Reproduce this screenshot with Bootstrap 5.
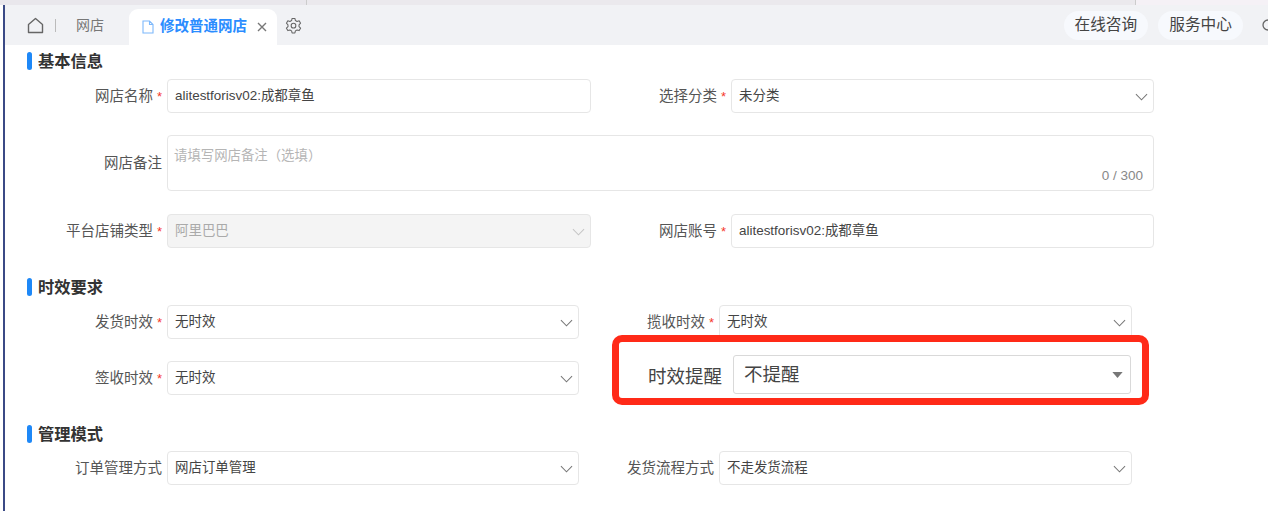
<!DOCTYPE html>
<html lang="zh-CN">
<head>
<meta charset="utf-8">
<title>修改普通网店</title>
<link href="https://cdn.jsdelivr.net/npm/bootstrap@5.3.0/dist/css/bootstrap.min.css" rel="stylesheet">
<style>
html,body{height:528px;overflow:hidden;background:#fff}
body{font-family:"Liberation Sans","Noto Sans CJK SC",sans-serif;color:#555;font-size:14.5px}
.topstrip{height:5px;background:#e9e7ec;display:flex}
.topstrip i{display:block;height:100%}
.seg1{width:306px}
.seg2{width:829px;border-left:1px solid #ccc;background:#ebe9ed}
.seg3{flex:1;border-left:1px solid #ccc;background:#f5f1f6}
.frame{height:506px;border-left:2px solid #3b4a86;margin-left:3px}
.tabbar{height:40px;background:#f1f2f5;overflow:hidden;padding-left:22px}
.tabhome{flex:none}
.tabsep{width:1px;height:13px;background:#bbb;margin:0 20px 0 11px}
.tabplain{font-size:14px;color:#777;margin-right:25px}
.tabcur{height:36px;margin-top:4px;width:148px;flex:none;background:#fff;border-radius:9px 9px 0 0;color:#2a8cff;padding-left:13px}
.tabcur b{font-weight:600;font-size:14.5px;margin:0 10px 0 6px;white-space:nowrap}
.tabgear{margin-left:8px}
.pillb{height:29px;border-radius:15px;background:#f7f9fd;color:#444;font-size:15.7px;padding:0 11px;margin-right:10px;white-space:nowrap}
.pillb.lastp{margin-right:12px}
.pilltail{width:13px;flex:none;overflow:hidden;padding-left:5px;display:flex}
.pilltail svg{flex:none}
.formarea{padding:0 0 0 22px}
.sect{height:18px;display:flex;align-items:center;color:#333;font-weight:600;font-size:16.3px;gap:6px}
.sect::before{content:"";width:5px;height:18px;border-radius:3px;background:#1e88f7}
.s1{margin-top:7px}.s2{margin-top:30px}.s3{margin-top:30px}
.frow{display:flex;height:34px;align-items:stretch}
.lbl{flex:none;display:flex;align-items:center;justify-content:flex-end;white-space:nowrap;color:#555;padding:1px 5px 0 0;width:140px}
.req{color:#f5382a;margin-left:4px;font-size:13px;line-height:1}
.fld{flex:none;display:flex;align-items:center;justify-content:space-between;border:1px solid #e6e6e6;border-radius:4px;background:#fff;padding:1px 5px 0 7px;font-size:13.45px;color:#444}
.w424{width:424px}.w423{width:423px}.w412{width:412px}.w413{width:413px}
.fld svg{color:#777}
.off{background:#f4f4f4;color:#aaa}.off svg{color:#c5c5c5}
.txa{height:56px;margin-top:22px}
.memo{width:987px;flex:none;border:1px solid #e6e6e6;border-radius:4px;padding:10px 7px 0 6px;position:relative;color:#b5b5b5;font-size:13.4px}
.cnt{position:absolute;right:10px;bottom:4px;color:#888;font-size:13.5px}
.redwrap{position:relative;width:413px;flex:none}
.redbox{position:absolute;left:-107px;top:-26px;width:537px;height:70px;border:7px solid #ff2a18;border-radius:10px;background:#fff;display:flex;align-items:flex-end;padding:0 11px 4px 29px;gap:11px}
.redbox span.t{font-size:18.5px;color:#444;white-space:nowrap;line-height:1;padding-bottom:8px}
.bigsel{flex:1;height:39px;border:1px solid #d9d9d9;border-radius:3px;display:flex;align-items:center;justify-content:space-between;font-size:18.5px;color:#444;padding:0 7px 0 10px}
.mt22{margin-top:22px}.mt23{margin-top:23px}.mt13{margin-top:9px}.mt16{margin-top:8px}
</style>
</head>
<body>
<div class="topstrip"><i class="seg1"></i><i class="seg2"></i><i class="seg3"></i></div>
<div class="frame">
  <div class="tabbar d-flex align-items-center">
    <svg class="tabhome" width="17" height="17" viewBox="0 0 17 17" fill="none" stroke="#666" stroke-width="1.4" stroke-linejoin="round"><path d="M1.5 7.5 8.500 1.500l7 6V15.500H1.500Z"/></svg>
    <span class="tabsep"></span>
    <span class="tabplain">网店</span>
    <div class="tabcur d-flex align-items-center">
      <svg width="12" height="14" viewBox="0 0 12 14" fill="none" stroke="#7db8fb" stroke-width="1.1"><path d="M1 1h6.500L11 4.500V13H1Z M7.500 1v3.500H11"/></svg>
      <b>修改普通网店</b>
      <svg width="10" height="10" viewBox="0 0 10 10" stroke="#777" stroke-width="1.4"><path d="M1 1l8 8M9 1 1 9"/></svg>
    </div>
    <svg class="tabgear" width="17" height="17" viewBox="0 0 24 24" fill="none" stroke="#666" stroke-width="1.5" stroke-linejoin="round"><path d="M10 2h4l.7 3 2.300 1.300 3-.9 2 3.400-2.200 2.200v2.600L22 15.800l-2 3.400-3-.9-2.300 1.300L14 22.500h-4l-.7-2.900L7 18.300l-3 .9-2-3.400 2.200-2.200V11L2 8.800l2-3.400 3 .9L9.300 5Z"/><circle cx="12" cy="12.200" r="3.300"/></svg>
    <div class="ms-auto d-flex align-items-center">
      <span class="pillb d-flex align-items-center">在线咨询</span>
      <span class="pillb lastp d-flex align-items-center">服务中心</span>
      <span class="pilltail"><svg width="16" height="16" viewBox="0 0 16 16" fill="none" stroke="#666" stroke-width="1.3"><circle cx="8" cy="8" r="5"/></svg></span>
    </div>
  </div>
  <div class="formarea">
    <div class="sect s1">基本信息</div>
    <div class="frow mt13">
      <div class="lbl">网店名称<span class="req">*</span></div>
      <div class="fld w424">alitestforisv02:成都章鱼</div>
      <div class="lbl">选择分类<span class="req">*</span></div>
      <div class="fld w423">未分类<svg width="13" height="8" viewBox="0 0 14 8" fill="none" stroke="currentColor" stroke-width="1.100"><path d="M1 1l6 6 6-6"/></svg></div>
    </div>
    <div class="frow txa">
      <div class="lbl">网店备注</div>
      <div class="memo">请填写网店备注（选填）<span class="cnt">0 / 300</span></div>
    </div>
    <div class="frow mt23">
      <div class="lbl">平台店铺类型<span class="req">*</span></div>
      <div class="fld w424 off">阿里巴巴<svg width="13" height="8" viewBox="0 0 14 8" fill="none" stroke="currentColor" stroke-width="1.100"><path d="M1 1l6 6 6-6"/></svg></div>
      <div class="lbl">网店账号<span class="req">*</span></div>
      <div class="fld w423">alitestforisv02:成都章鱼</div>
    </div>
    <div class="sect s2">时效要求</div>
    <div class="frow mt13">
      <div class="lbl">发货时效<span class="req">*</span></div>
      <div class="fld w412">无时效<svg width="13" height="8" viewBox="0 0 14 8" fill="none" stroke="currentColor" stroke-width="1.100"><path d="M1 1l6 6 6-6"/></svg></div>
      <div class="lbl">揽收时效<span class="req">*</span></div>
      <div class="fld w413">无时效<svg width="13" height="8" viewBox="0 0 14 8" fill="none" stroke="currentColor" stroke-width="1.100"><path d="M1 1l6 6 6-6"/></svg></div>
    </div>
    <div class="frow mt22">
      <div class="lbl">签收时效<span class="req">*</span></div>
      <div class="fld w412">无时效<svg width="13" height="8" viewBox="0 0 14 8" fill="none" stroke="currentColor" stroke-width="1.100"><path d="M1 1l6 6 6-6"/></svg></div>
      <div class="lbl"></div>
      <div class="redwrap">
        <div class="redbox">
          <span class="t">时效提醒</span>
          <div class="bigsel">不提醒<svg width="11" height="6" viewBox="0 0 12 7"><path d="M0 0h12L6 7Z" fill="#777"/></svg></div>
        </div>
      </div>
    </div>
    <div class="sect s3">管理模式</div>
    <div class="frow mt16">
      <div class="lbl">订单管理方式</div>
      <div class="fld w412">网店订单管理<svg width="13" height="8" viewBox="0 0 14 8" fill="none" stroke="currentColor" stroke-width="1.100"><path d="M1 1l6 6 6-6"/></svg></div>
      <div class="lbl">发货流程方式</div>
      <div class="fld w413">不走发货流程<svg width="13" height="8" viewBox="0 0 14 8" fill="none" stroke="currentColor" stroke-width="1.100"><path d="M1 1l6 6 6-6"/></svg></div>
    </div>
  </div>
</div>
</body>
</html>
